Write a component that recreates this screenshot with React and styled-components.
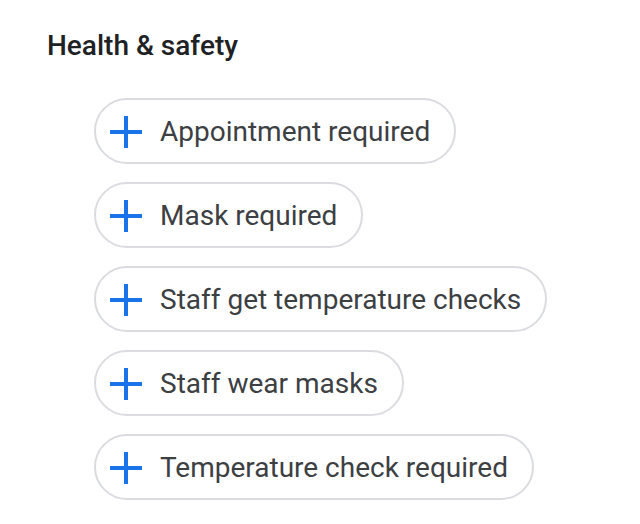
import React from "react";
import styled, { createGlobalStyle } from "styled-components";

const GlobalStyle = createGlobalStyle`
  html, body {
    margin: 0;
    padding: 0;
    background: #ffffff;
  }
  body {
    font-family: Roboto, "Liberation Sans", Arial, sans-serif;
  }
`;

const Section = styled.section`
  display: flex;
  flex-direction: column;
  padding: 26px 0 0 47px;
`;

const Title = styled.h2`
  margin: 0;
  font-size: 28px;
  line-height: 40px;
  font-weight: 500;
  color: #202124;
`;

const ChipList = styled.div`
  display: flex;
  flex-direction: column;
  align-items: flex-start;
  gap: 18px;
  margin: 32px 0 0 47px;
`;

const Chip = styled.button`
  display: flex;
  align-items: center;
  gap: 18px;
  height: 66px;
  box-sizing: border-box;
  padding: 1px 24px 0 14px;
  border: 2px solid #dadce0;
  border-radius: 33px;
  background: #ffffff;
  font-family: Roboto, "Liberation Sans", Arial, sans-serif;
  font-size: 28px;
  color: #3c4043;
  cursor: pointer;
`;

const PlusIcon = () => (
  <svg width="32" height="32" viewBox="0 0 32 32">
    <path d="M14 0h4v14h14v4H18v14h-4V18H0v-4h14z" fill="#1a73e8" />
  </svg>
);

const items = [
  "Appointment required",
  "Mask required",
  "Staff get temperature checks",
  "Staff wear masks",
  "Temperature check required",
];

const App = () => {
  return (
    <>
      <GlobalStyle />
      <Section>
        <Title>Health &amp; safety</Title>
        <ChipList>
          {items.map((label) => (
            <Chip key={label}>
              <PlusIcon />
              {label}
            </Chip>
          ))}
        </ChipList>
      </Section>
    </>
  );
};

export default App;
